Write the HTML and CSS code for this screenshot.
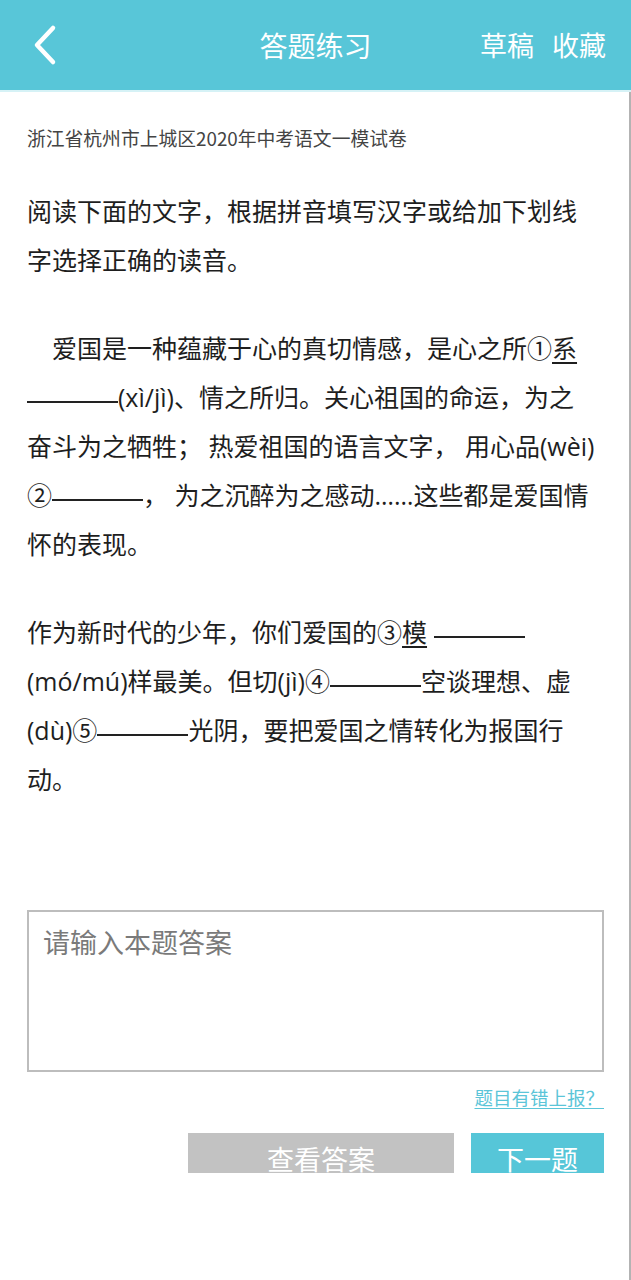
FILE: index.html
```html
<!DOCTYPE html>
<html lang="zh-CN">
<head>
<meta charset="utf-8">
<title>答题练习</title>
<link rel="stylesheet" href="styles.css">
</head>
<body>
<div class="app">
  <header class="topbar">
    <div class="topbar-left">
      <svg class="back" viewBox="0 0 30 44" width="30" height="44" aria-hidden="true">
        <polyline points="23,5 7,22 23,39" fill="none" stroke="#fff" stroke-width="4.5" stroke-linecap="round" stroke-linejoin="round"/>
      </svg>
    </div>
    <h1 class="topbar-title">答题练习</h1>
    <div class="topbar-actions"><span>草稿</span><span>收藏</span></div>
  </header>
  <main class="content">
    <p class="source">浙江省杭州市上城区2020年中考语文一模试卷</p>
    <div class="question">
      <p>阅读下面的文字，根据拼音填写汉字或给加下划线<br>字选择正确的读音。</p>
      <p class="indent">爱国是一种蕴藏于心的真切情感，是心之所①<u>系</u><br><span class="blank"></span>(xì/jì)、情之所归。关心祖国的命运，为之<br>奋斗为之牺牲； 热爱祖国的语言文字， 用心品(wèi)<br>②<span class="blank"></span>， 为之沉醉为之感动……这些都是爱国情<br>怀的表现。</p>
      <p>作为新时代的少年，你们爱国的③<u>模</u> <span class="blank"></span><br>(mó/mú)样最美。但切(jì)④<span class="blank"></span>空谈理想、虚<br>(dù)⑤<span class="blank"></span>光阴，要把爱国之情转化为报国行<br>动。</p>
    </div>
    <textarea class="answer" placeholder="请输入本题答案"></textarea>
    <div class="report"><a href="#">题目有错上报？</a></div>
    <div class="actions">
      <button class="btn btn-gray" type="button">查看答案</button>
      <button class="btn btn-blue" type="button">下一题</button>
    </div>
  </main>
</div>
</body>
</html>
```

FILE: styles.css
```css
* { box-sizing: border-box; }
html, body { margin: 0; padding: 0; }
body {
  font-family: "Open Sans", "Noto Sans CJK SC", sans-serif;
  color: #222;
  background: #fff;
}
.app {
  width: 631px;
  min-height: 1280px;
  display: flex;
  flex-direction: column;
}
.topbar {
  height: 92px;
  background: #58c6d8;
  border-bottom: 2px solid #d6f2f6;
  display: grid;
  grid-template-columns: 1fr auto 1fr;
  align-items: center;
  color: #fff;
  font-family: "Noto Sans CJK SC", sans-serif;
}
.back {
  display: block;
  margin-left: 30px;
}
.topbar-title {
  margin: 0;
  font-size: 28px;
  font-weight: normal;
  line-height: 36px;
}
.topbar-actions {
  justify-self: end;
  display: flex;
  gap: 18px;
  padding-right: 25px;
  font-size: 27px;
  line-height: 36px;
}
.content {
  flex: 1;
  padding: 0 25px 0 27px;
  border-right: 2px solid #b3b3b3;
}
.source {
  margin: 34px 0 0;
  font-family: "Noto Sans CJK SC", sans-serif;
  font-size: 18.8px;
  line-height: 24px;
  color: #444;
}
.question {
  margin-top: 37px;
  font-size: 25px;
  line-height: 49px;
  white-space: nowrap;
  color: #1e1e1e;
}
.question p { margin: 0; }
.question p + p { margin-top: 39px; }
.indent { text-indent: 1em; }
.question u {
  text-decoration-thickness: 2px;
  text-underline-offset: 4px;
}
.blank {
  display: inline-block;
  width: 91px;
  border-bottom: 2px solid #222;
  margin-bottom: 4px;
  vertical-align: baseline;
  text-indent: 0;
}
.answer {
  display: block;
  width: 100%;
  height: 162px;
  margin: 106px 0 0;
  padding: 11px 14px;
  border: 2px solid #bdbdbd;
  border-radius: 0;
  resize: none;
  outline: none;
  font-family: "Noto Sans CJK SC", sans-serif;
  font-size: 27px;
  line-height: 38px;
  color: #333;
  background: #fff;
}
.answer::placeholder { color: #7a7a7a; }
.report {
  margin-top: 13px;
  text-align: right;
  font-family: "Noto Sans CJK SC", sans-serif;
  font-size: 18.5px;
  line-height: 24px;
}
.report a {
  color: #5bc5d8;
  text-decoration: underline;
  text-underline-offset: 3px;
}
.actions {
  margin-top: 24px;
  display: flex;
  justify-content: flex-end;
  gap: 17px;
}
.btn {
  display: block;
  height: 40px;
  border: 0;
  border-radius: 0;
  padding: 11px 0 0;
  overflow: hidden;
  font-family: "Noto Sans CJK SC", sans-serif;
  font-size: 27px;
  line-height: 29px;
  color: #fff;
  text-align: center;
}
.btn-gray { width: 266px; background: #c2c2c2; }
.btn-blue { width: 133px; background: #56c6d8; }
```
